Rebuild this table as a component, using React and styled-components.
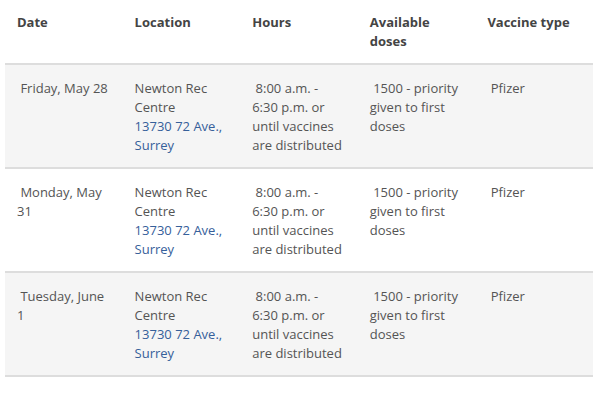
import React from 'react';
import styled, { createGlobalStyle } from 'styled-components';

const GlobalStyle = createGlobalStyle`
  body {
    margin: 0;
    background: #fff;
    font-family: "Open Sans", "Noto Sans", sans-serif;
  }
`;

const Wrapper = styled.div`
  padding: 0 7px 0 5px;
`;

const Table = styled.table`
  width: 100%;
  border-collapse: collapse;
  table-layout: fixed;
  font-size: 13px;
  line-height: 19px;
  color: #545454;
`;

const HeadCell = styled.th`
  text-align: left;
  vertical-align: top;
  font-weight: 700;
  color: #444;
  padding: 13px 12px 12px;
  border-bottom: 2px solid #ddd;
`;

const Row = styled.tr`
  background: ${(props) => (props.$shaded ? '#f5f5f5' : '#fff')};
  border-bottom: 2px solid #ddd;
`;

const Cell = styled.td`
  vertical-align: top;
  padding: 14px 12px 12px;
`;

const Link = styled.a`
  color: #36609a;
  text-decoration: none;
`;

const rows = [
  { date: '\u00a0Friday, May 28' },
  { date: '\u00a0Monday, May 31' },
  { date: '\u00a0Tuesday, June 1' },
];

const App = () => {
  return (
    <>
      <GlobalStyle />
      <Wrapper>
        <Table>
          <thead>
            <tr>
              <HeadCell>Date</HeadCell>
              <HeadCell>Location</HeadCell>
              <HeadCell>Hours</HeadCell>
              <HeadCell>Available doses</HeadCell>
              <HeadCell>Vaccine type</HeadCell>
            </tr>
          </thead>
          <tbody>
            {rows.map((row, i) => (
              <Row key={i} $shaded={i % 2 === 0}>
                <Cell>{row.date}</Cell>
                <Cell>
                  Newton Rec Centre
                  <br />
                  <Link href="#">13730 72 Ave., Surrey</Link>
                </Cell>
                <Cell>{'\u00a08:00 a.m. - 6:30 p.m. or until vaccines are distributed'}</Cell>
                <Cell>{'\u00a01500 - priority given to first doses'}</Cell>
                <Cell>{'\u00a0Pfizer'}</Cell>
              </Row>
            ))}
          </tbody>
        </Table>
      </Wrapper>
    </>
  );
};

export default App;
